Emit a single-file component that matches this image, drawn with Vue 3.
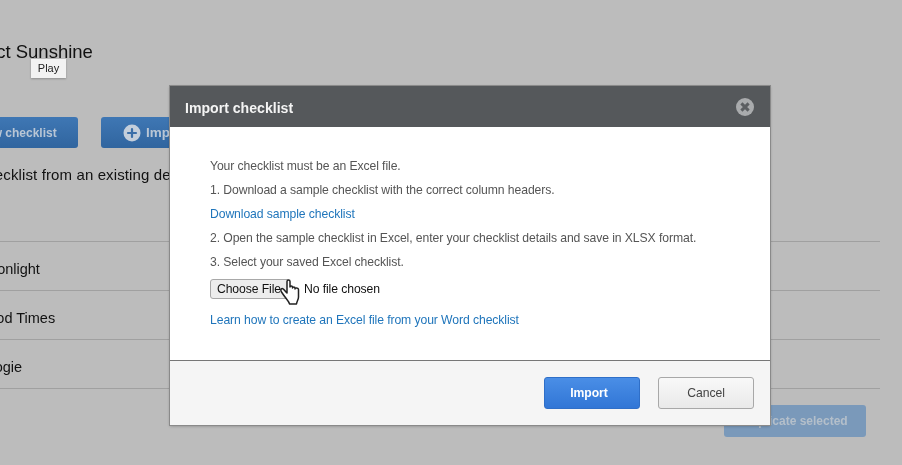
<script setup>
const rows = ['Moonlight', 'Good Times', 'Boogie']
</script>

<template>
  <div class="page">
    <div class="back">
      <h1 class="title">Project Sunshine</h1>
      <div class="actions">
        <button class="btn new">New checklist</button>
        <button class="btn imp">
          <svg class="plus" viewBox="0 0 18 18" width="18" height="18">
            <circle cx="9" cy="9" r="8.500" fill="#c3cedb" />
            <path d="M9 5v8M5 9h8" stroke="#3a6ea8" stroke-width="2.200" stroke-linecap="round" />
          </svg>
          Import checklist
        </button>
      </div>
      <p class="desc">Create a checklist from an existing design document</p>
      <ul class="rows">
        <li v-for="r in rows" :key="r" class="row">{{ r }}</li>
      </ul>
      <div class="foot"><button class="dup">Duplicate selected</button></div>
    </div>

    <div class="tip">Play</div>

    <section class="modal">
      <header class="head">
        <h2>Import checklist</h2>
        <svg viewBox="0 0 18 18" width="18" height="18">
          <circle cx="9" cy="9" r="9" fill="#a9abad" />
          <path d="M5.400 5.400l7.200 7.200M12.600 5.400l-7.200 7.200" stroke="#5c5f62" stroke-width="3" />
        </svg>
      </header>
      <div class="body">
        <p>Your checklist must be an Excel file.</p>
        <p>1. Download a sample checklist with the correct column headers.</p>
        <p><a>Download sample checklist</a></p>
        <p>2. Open the sample checklist in Excel, enter your checklist details and save in XLSX format.</p>
        <p>3. Select your saved Excel checklist.</p>
        <div class="file">
          <span class="choose">Choose File</span>
          <span class="none">No file chosen</span>
          <svg class="hand" viewBox="0 0 20 26" width="20" height="26">
            <path d="M7 2.500C7 .5 10 .5 10 2.500V8c0-1.500 2.500-1.500 2.500 0v1c0-1.500 2.500-1.500 2.500 0v1c0-1.500 3.500-1.500 3.500.5V18c0 2.500-1.500 4-2 7h-7c-.5-3-3.500-5-8-12-1.300-2-.5-3.500.7-3.500 1.300 0 3.300 3 4.800 4.500z" fill="#fff" stroke="#222" stroke-width="1.500" stroke-linejoin="round" />
          </svg>
        </div>
        <p class="learn"><a>Learn how to create an Excel file from your Word checklist</a></p>
      </div>
      <footer class="bar">
        <button class="ok">Import</button>
        <button class="cancel">Cancel</button>
      </footer>
    </section>
  </div>
</template>

<style>
html, body { margin: 0; }
</style>

<style scoped>
.page {
  position: relative;
  width: 902px;
  height: 465px;
  overflow: hidden;
  background: #bcbcbc;
  font-family: "Liberation Sans", Arial, sans-serif;
  color: #111;
  filter: blur(.35px);
}
.back {
  width: 880px;
  padding-top: 42px;
  box-sizing: border-box;
}
.title {
  margin: 0 0 0 -47px;
  font-size: 18.500px;
  line-height: 20px;
  font-weight: 400;
  white-space: nowrap;
}
.actions {
  display: flex;
  gap: 23px;
  margin: 55px 0 0 -60px;
}
.btn {
  height: 31px;
  border: 0;
  border-radius: 3px;
  background: linear-gradient(#3f77b4, #30659f);
  color: #b9c6d5;
  font: bold 12px "Liberation Sans", Arial, sans-serif;
  display: flex;
  align-items: center;
  white-space: nowrap;
  padding: 0;
}
.new { width: 138px; justify-content: center; padding-left: 16px; }
.btn.imp { width: 150px; gap: 5px; padding-left: 22px; font-size: 13.500px; }
.desc {
  margin: 19px 0 0 -84px;
  font-size: 15px;
  line-height: 16px;
  letter-spacing: .12px;
  white-space: nowrap;
}
.rows {
  list-style: none;
  margin: 58px 0 0;
  padding: 0;
  border-top: 1px solid #a0a0a0;
}
.row {
  height: 48px;
  line-height: 54px;
  border-bottom: 1px solid #a0a0a0;
  font-size: 14.500px;
  text-indent: -23px;
  white-space: nowrap;
}
.foot {
  display: flex;
  justify-content: flex-end;
  margin: 16px 14px 0 0;
}
.foot .dup {
  width: 142px;
  height: 32px;
  border: 0;
  border-radius: 3px;
  background: #7a99ba;
  color: #b4bfca;
  font: bold 12px "Liberation Sans", Arial, sans-serif;
}
.tip {
  position: absolute;
  left: 31px;
  top: 59px;
  width: 35px;
  height: 19px;
  background: #f2f2f2;
  box-shadow: 0 1px 2px rgba(0, 0, 0, .25);
  font-size: 11px;
  line-height: 19px;
  text-align: center;
  color: #222;
}
.modal {
  position: absolute;
  left: 170px;
  top: 86px;
  width: 600px;
  height: 339px;
  display: flex;
  flex-direction: column;
  background: #fff;
  box-shadow: 0 0 0 1px #8a8a8a, 0 1px 3px rgba(0, 0, 0, .3);
}
.head {
  height: 41px;
  flex: none;
  box-sizing: border-box;
  padding: 1px 16px 0 15px;
  display: flex;
  align-items: center;
  justify-content: space-between;
  background: #55585b;
}
.head h2 {
  margin: 2px 0 0;
  color: #f4f4f4;
  font-size: 14.100px;
  font-weight: 700;
}
.body {
  flex: 1;
  padding: 32px 40px 0;
  font-size: 12.200px;
  letter-spacing: -.09px;
  color: #555;
}
.body p {
  margin: 0 0 10px;
  line-height: 14px;
  white-space: nowrap;
}
.body a { color: #1f75bb; }
.file {
  position: relative;
  display: flex;
  align-items: center;
  height: 20px;
  margin-bottom: 14px;
}
.choose {
  box-sizing: border-box;
  width: 80px;
  height: 20px;
  line-height: 18px;
  text-align: center;
  padding-right: 2px;
  border: 1px solid #a8a8a8;
  border-radius: 3px;
  background: #ededed;
  color: #111;
}
.none { margin-left: 14px; color: #111; }
.hand { position: absolute; left: 70px; top: 0; }
.bar {
  height: 65px;
  flex: none;
  box-sizing: border-box;
  border-top: 1px solid #777;
  background: #f5f5f5;
  display: flex;
  justify-content: flex-end;
  align-items: center;
  gap: 18px;
  padding: 1px 16px 1px 0;
}
.bar button {
  width: 96px;
  height: 32px;
  border-radius: 3px;
  font: 12.200px "Liberation Sans", Arial, sans-serif;
  letter-spacing: -.05px;
}
.bar .ok {
  border: 1px solid #2f6fc8;
  background: linear-gradient(#4a8ee6, #3176d6);
  color: #fff;
  font-weight: 700;
  padding: 0 6px 0 0;
}
.cancel {
  border: 1px solid #a8a8a8;
  background: linear-gradient(#f8f8f8, #e9e9e9);
  color: #444;
}
</style>
